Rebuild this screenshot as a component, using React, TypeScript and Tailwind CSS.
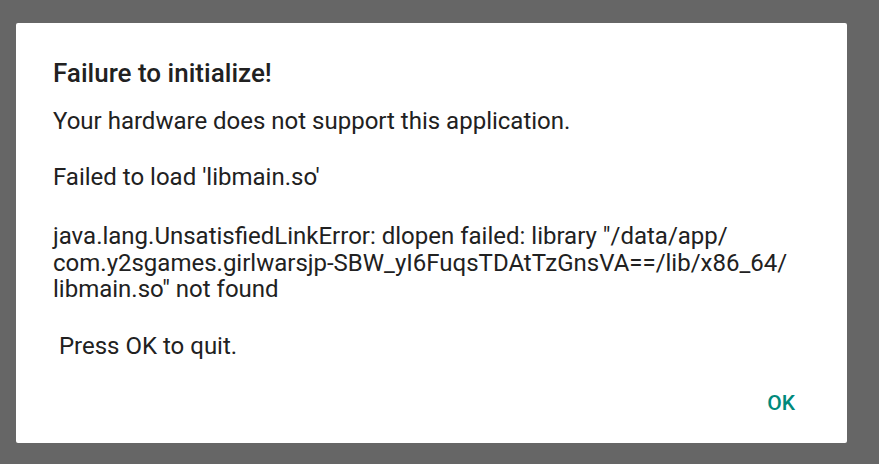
import React from 'react';

const App = () => {
  return (
    <div className="w-[879px] h-[464px] bg-[#666666] pt-[23px] pl-4 font-['Roboto',sans-serif]">
      <div className="w-[831px] h-[420px] bg-white rounded-[2px] flex flex-col">
        <div className="pt-[34px] px-[37px] text-[#212121]">
          <h1 className="text-[26px] leading-[32px] font-medium font-['Roboto_Medium','Roboto',sans-serif]">
            Failure to initialize!
          </h1>
          <div className="mt-[19px] text-[24px] leading-[26.67px]">
            <p>Your hardware does not support this application.</p>
            <p className="mt-[29.3px]">Failed to load 'libmain.so'</p>
            <p className="mt-[32.3px] whitespace-nowrap">
              java.lang.UnsatisfiedLinkError: dlopen failed: library "/data/app/
              <br />
              com.y2sgames.girlwarsjp-SBW_yI6FuqsTDAtTzGnsVA==/lib/x86_64/
              <br />
              libmain.so" not found
            </p>
            <p className="mt-[30.3px] whitespace-pre"> Press OK to quit.</p>
          </div>
        </div>
        <div className="flex justify-end pr-[52px] mt-[31.5px]">
          <button className="text-[21px] leading-[24px] font-medium font-['Roboto_Medium','Roboto',sans-serif] text-[#00897b]">
            OK
          </button>
        </div>
      </div>
    </div>
  );
};

export default App;
